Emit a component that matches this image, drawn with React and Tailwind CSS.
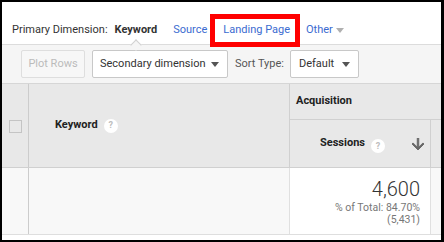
import React from 'react';

function Caret({ className }) {
  return (
    <svg className={className} width="8" height="5" viewBox="0 0 8 5">
      <path d="M0 0h8L4 5z" fill="currentColor" />
    </svg>
  );
}

function Help() {
  return (
    <span className="inline-flex items-center justify-center w-[14px] h-[14px] rounded-full bg-white text-[#bdbdbd] text-[9px] font-bold leading-none">?</span>
  );
}

export default function App() {
  return (
    <div className="w-[444px] h-[242px] bg-black pt-[2px] pl-[2px] pr-[3px] pb-[2px]">
      <div className="relative h-full bg-white flex flex-col overflow-hidden font-['Roboto',_'Liberation_Sans',_sans-serif]">
        {/* dimension tabs */}
        <div className="relative z-10 h-[43px] shrink-0 border-b border-[#dcdcdc] flex items-start pt-[20px] pl-[10px] text-[11px] leading-[16px]">
          <span className="text-[#333]">Primary Dimension:</span>
          <span className="relative ml-[7px] font-bold text-[#333]">
            Keyword
            <span className="absolute left-[17px] top-[19px] w-[8px] h-[8px] rotate-45 bg-[#f5f5f5] border-l border-t border-[#d0d0d0]"></span>
          </span>
          <span className="ml-[16px] text-[#3b6bd0]">Source</span>
          <span className="relative ml-[16px] text-[#3b6bd0]">
            Landing Page
            <span className="absolute -left-[13px] -right-[10px] -top-[8px] -bottom-[9px] border-[5px] border-[#ff0000]"></span>
          </span>
          <span className="ml-[16px] text-[#3b6bd0] flex items-center">
            Other
            <Caret className="ml-[3px] text-[#b0b0b0]" />
          </span>
        </div>

        {/* toolbar */}
        <div className="h-[38px] shrink-0 bg-[#f5f5f5] flex items-start pt-[5px] pl-[19px] text-[11px]">
          <div className="w-[64px] h-[28px] flex items-center justify-center border border-[#dedede] rounded-[2px] bg-[#f7f7f7] text-[#bbb]">Plot Rows</div>
          <div className="ml-[7px] w-[136px] h-[28px] flex items-center justify-between pl-[7px] pr-[8px] border border-[#c8c8c8] rounded-[2px] bg-white text-[#333]">
            <span>Secondary dimension</span>
            <Caret className="text-[#555]" />
          </div>
          <span className="ml-[7px] h-[28px] flex items-center text-[#555]">Sort Type:</span>
          <div className="ml-[6px] w-[69px] h-[28px] flex items-center justify-between pl-[8px] pr-[8px] border border-[#c8c8c8] rounded-[2px] bg-white text-[#333]">
            <span>Default</span>
            <Caret className="text-[#555]" />
          </div>
        </div>

        {/* table */}
        <div className="border-t border-[#d6d6d6] flex flex-col">
          <div className="h-[84px] bg-[#e8e8e8] border-b border-[#d0d0d0] flex">
            <div className="w-[27px] border-r border-[#cccccc] flex items-center justify-center">
              <span className="w-[13px] h-[13px] border border-[#c4c4c4] mt-[1px]"></span>
            </div>
            <div className="w-[261px] border-r border-[#d0d0d0] flex items-center pl-[26px] gap-[6px]">
              <span className="font-bold text-[11px] text-[#222]">Keyword</span>
              <Help />
            </div>
            <div className="flex-1 flex flex-col">
              <div className="h-[36px] border-b border-[#d0d0d0] flex items-center pl-[6px] font-bold text-[11px] text-[#222]">Acquisition</div>
              <div className="flex-1 flex">
                <div className="w-[141px] border-r border-[#d0d0d0] flex items-center pl-[30px] pr-[6px]">
                  <span className="font-bold text-[11px] text-[#222]">Sessions</span>
                  <span className="ml-[6px]"><Help /></span>
                  <svg className="ml-auto text-[#666]" width="12" height="12" viewBox="4 4 16 16">
                    <path d="M20 12l-1.41-1.41L13 16.17V4h-2v12.17l-5.58-5.59L4 12l8 8 8-8z" fill="currentColor" stroke="currentColor" strokeWidth="1.2" strokeLinejoin="round" />
                  </svg>
                </div>
              </div>
            </div>
          </div>

          <div className="h-[67px] bg-[#f8f8f8] border-b border-[#dedede] flex">
            <div className="w-[27px] border-r border-[#cccccc]"></div>
            <div className="w-[261px] border-r border-[#e0e0e0]"></div>
            <div className="w-[141px] bg-white border-r border-[#e0e0e0] flex flex-col items-end pr-[10px] pt-[9px]">
              <span className="text-[20px] leading-[24px] font-light text-[#333]">4,600</span>
              <span className="text-[10.5px] leading-[12px] text-[#777] mt-[1px]">% of Total: 84.70%</span>
              <span className="text-[10.5px] leading-[12px] text-[#777]">(5,431)</span>
            </div>
          </div>
        </div>
      </div>
    </div>
  );
}
